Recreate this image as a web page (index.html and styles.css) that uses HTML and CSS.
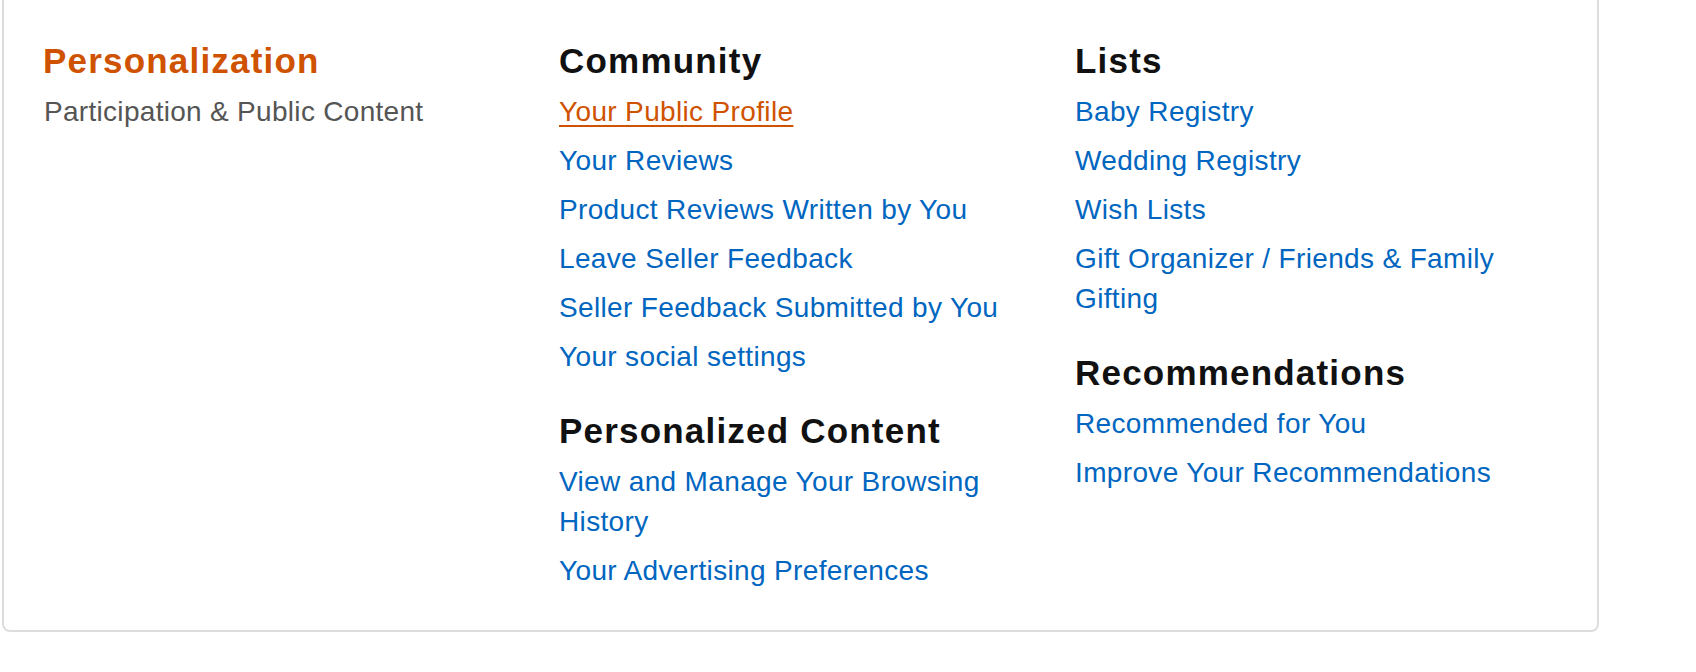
FILE: index.html
```html
<!DOCTYPE html>
<html lang="en">
<head>
<meta charset="utf-8">
<title>Your Account - Personalization</title>
<link rel="stylesheet" href="styles.css">
</head>
<body>
<div class="box">
  <div class="grid">
    <div class="col intro">
      <h2 class="title">Personalization</h2>
      <p class="subtitle">Participation &amp; Public Content</p>
    </div>
    <div class="col">
      <section class="group">
        <h3 class="heading">Community</h3>
        <ul class="links">
          <li><a class="link active" href="#">Your Public Profile</a></li>
          <li><a class="link" href="#">Your Reviews</a></li>
          <li><a class="link" href="#">Product Reviews Written by You</a></li>
          <li><a class="link" href="#">Leave Seller Feedback</a></li>
          <li><a class="link" href="#">Seller Feedback Submitted by You</a></li>
          <li><a class="link" href="#">Your social settings</a></li>
        </ul>
      </section>
      <section class="group">
        <h3 class="heading">Personalized Content</h3>
        <ul class="links">
          <li><a class="link" href="#">View and Manage Your Browsing History</a></li>
          <li><a class="link" href="#">Your Advertising Preferences</a></li>
        </ul>
      </section>
    </div>
    <div class="col">
      <section class="group">
        <h3 class="heading">Lists</h3>
        <ul class="links">
          <li><a class="link" href="#">Baby Registry</a></li>
          <li><a class="link" href="#">Wedding Registry</a></li>
          <li><a class="link" href="#">Wish Lists</a></li>
          <li><a class="link" href="#">Gift Organizer / Friends &amp; Family Gifting</a></li>
        </ul>
      </section>
      <section class="group">
        <h3 class="heading">Recommendations</h3>
        <ul class="links">
          <li><a class="link" href="#">Recommended for You</a></li>
          <li><a class="link" href="#">Improve Your Recommendations</a></li>
        </ul>
      </section>
    </div>
  </div>
</div>
</body>
</html>
```

FILE: styles.css
```css
* {
  box-sizing: border-box;
}

html, body {
  margin: 0;
  padding: 0;
  background: #fff;
}

body {
  font-family: "Liberation Sans", Arial, sans-serif;
  color: #111;
}

.box {
  margin-left: 2px;
  width: 1597px;
  border: 2px solid #dddddd;
  border-top: none;
  border-radius: 0 0 8px 8px;
  padding: 37px 40px 39px 40px;
}

.grid {
  display: grid;
  grid-template-columns: 515px 516px 1fr;
}

.title {
  margin: 0 0 7px -1px;
  font-size: 35px;
  line-height: 48px;
  font-weight: 700;
  letter-spacing: 1.2px;
  color: #cf5200;
}

.subtitle {
  margin: 0;
  font-size: 28px;
  line-height: 40px;
  letter-spacing: 0.3px;
  color: #555555;
}

.group + .group {
  margin-top: 30px;
}

.heading {
  margin: 0 0 7px;
  font-size: 35px;
  line-height: 48px;
  font-weight: 700;
  letter-spacing: 1.2px;
  color: #111111;
}

.links {
  list-style: none;
  margin: 0;
  padding: 0;
  padding-right: 50px;
}

.links li {
  font-size: 28px;
  line-height: 40px;
  letter-spacing: 0.35px;
}

.links li + li {
  margin-top: 9px;
}

.link {
  color: #0066c0;
  text-decoration: none;
}

.link.active {
  color: #cf5200;
  text-decoration: underline;
  text-decoration-thickness: 2px;
  text-underline-offset: 4px;
}
```
